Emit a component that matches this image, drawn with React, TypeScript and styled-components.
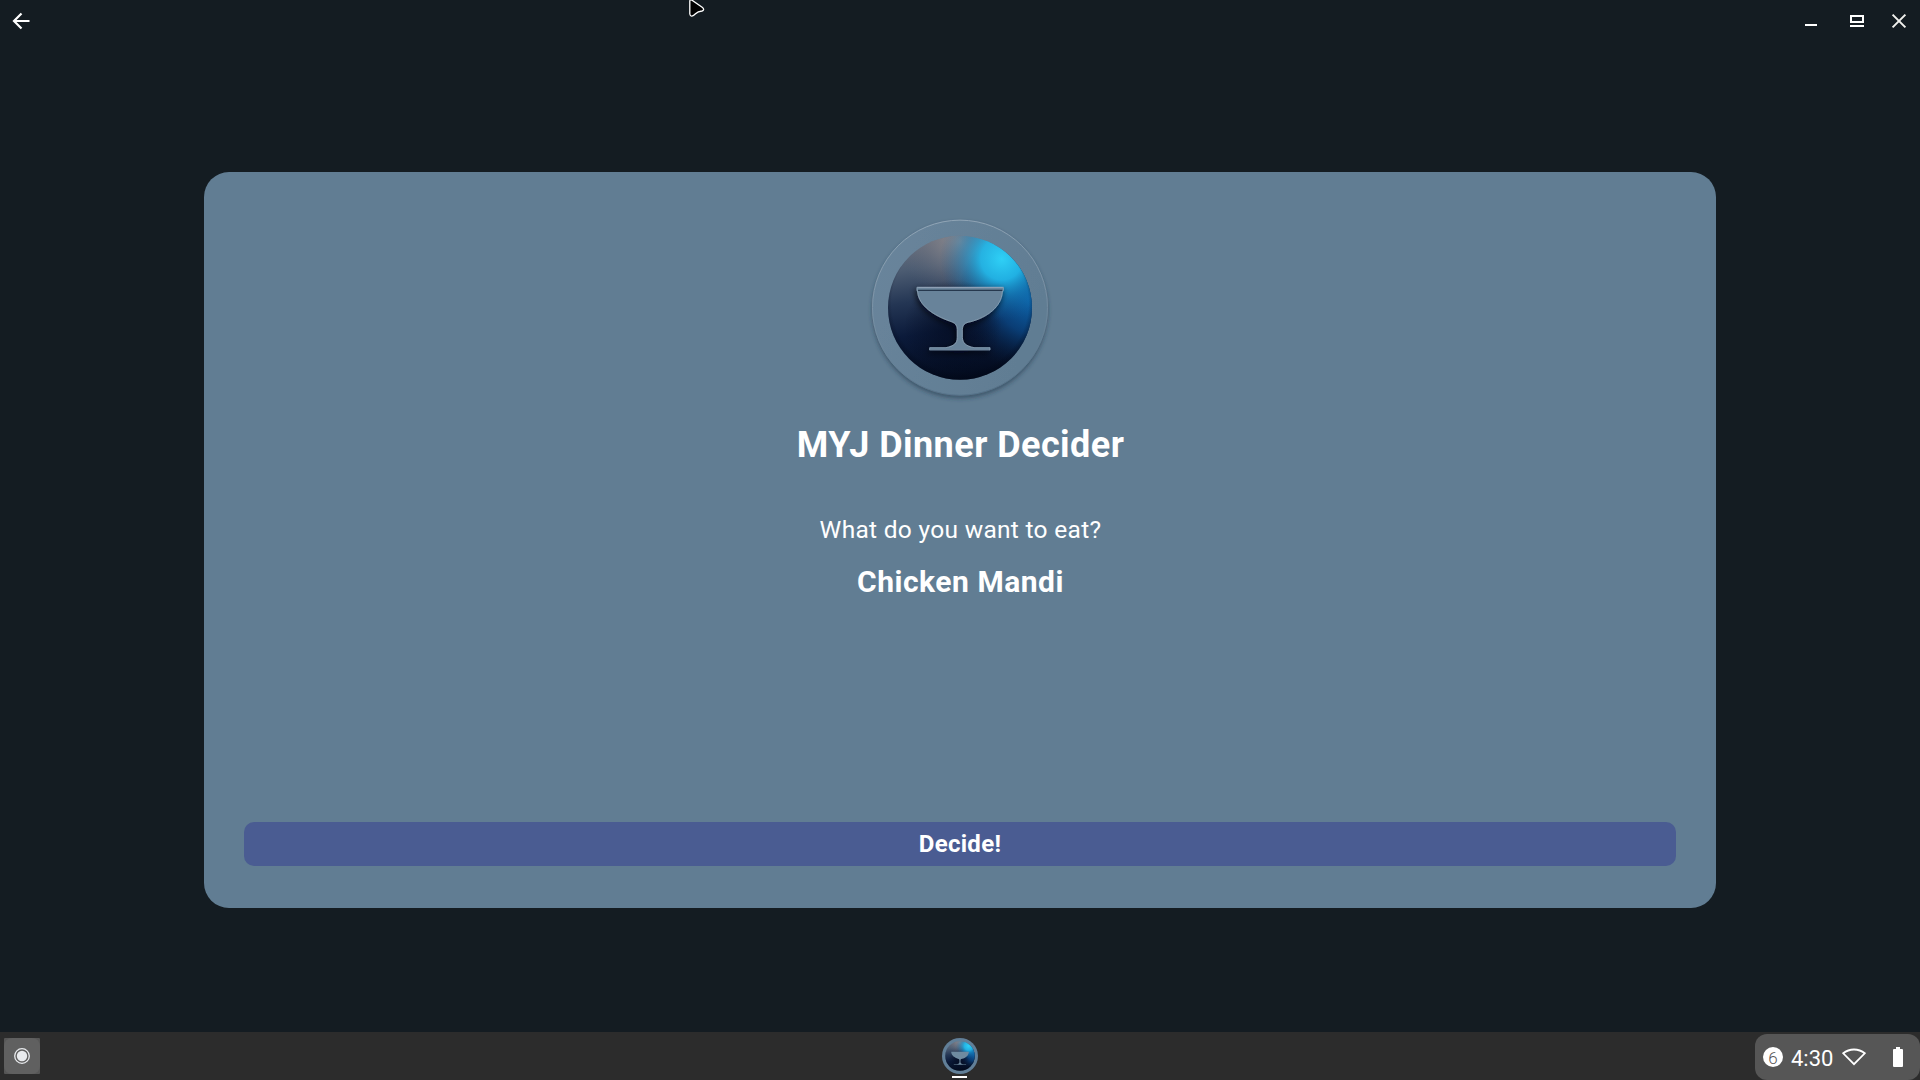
import React from "react";
import styled, { createGlobalStyle } from "styled-components";

const GlobalStyle = createGlobalStyle`
  * { box-sizing: border-box; }
  html, body { margin: 0; background: #141c22; }
  body { font-family: Roboto, "Noto Sans", sans-serif; color: #fff; overflow: hidden; }
`;

const Screen = styled.div`
  position: relative;
  width: 1920px;
  height: 1080px;
  display: flex;
  flex-direction: column;
  background: #141c22;
`;

const TitleBar = styled.header`
  height: 48px;
  flex: none;
  display: flex;
  justify-content: space-between;
  padding: 0 13px 0 12px;
`;

const WindowControls = styled.div`
  display: flex;
  gap: 26px;
`;

const PlainButton = styled.button<{ $width: number }>`
  width: ${(p) => p.$width}px;
  height: 42px;
  padding: 0;
  border: 0;
  background: none;
  display: flex;
  align-items: center;
  justify-content: center;
  svg { display: block; flex: none; }
`;

const Pointer = styled.svg`
  position: absolute;
  left: 688px;
  top: -2px;
`;

const Content = styled.main`
  flex: 1;
  display: flex;
  justify-content: center;
  align-items: flex-start;
  padding-top: 124px;
`;

const Card = styled.section`
  width: 1512px;
  height: 736px;
  padding: 28px 40px 42px;
  border-radius: 25px;
  background: #617d93;
  display: flex;
  flex-direction: column;
  align-items: center;
`;

const Title = styled.h1`
  margin: 4px 0 0;
  padding-left: 1px;
  font-size: 36px;
  line-height: 42px;
  font-weight: 700;
  letter-spacing: 0.45px;
`;

const Question = styled.p`
  margin: 49px 0 0;
  padding-left: 1px;
  font-size: 24.5px;
  line-height: 30px;
  letter-spacing: 0.3px;
`;

const Answer = styled.p`
  margin: 19px 0 0;
  padding-left: 1px;
  font-size: 30px;
  line-height: 36px;
  font-weight: 700;
  letter-spacing: 0.52px;
`;

const DecideButton = styled.button`
  width: 100%;
  height: 44px;
  margin-top: auto;
  padding: 0;
  border: 0;
  border-radius: 10px;
  background: #4a5c92;
  color: #fff;
  font: 700 24px/44px Roboto, sans-serif;
  letter-spacing: 0.3px;
`;

const Shelf = styled.footer`
  height: 48px;
  flex: none;
  display: grid;
  grid-template-columns: 1fr 36px 1fr;
  background: #2c2c2c;
`;

const Launcher = styled.button`
  width: 36px;
  height: 36px;
  margin: 6px 0 0 4px;
  padding: 0;
  border: 0;
  border-radius: 1px;
  background: #565656;
  svg { display: block; }
`;

const RunningApp = styled.div`
  display: flex;
  flex-direction: column;
  align-items: center;
  padding-top: 6px;
  gap: 2px;
  svg { display: block; }
`;

const RunningMark = styled.span`
  width: 15px;
  height: 2px;
  margin-right: 1px;
  background: #fff;
`;

const StatusTray = styled.div`
  justify-self: end;
  width: 165px;
  height: 46px;
  margin-top: 2px;
  padding-left: 8px;
  border-radius: 12px;
  background: #565656;
  display: flex;
  align-items: center;
  svg { display: block; flex: none; }
`;

const CountBadge = styled.span`
  width: 20px;
  height: 20px;
  border-radius: 50%;
  background: #fff;
  color: #565656;
  font-size: 17px;
  font-weight: 300;
  line-height: 22px;
  text-align: center;
`;

const Clock = styled.span`
  width: 42px;
  margin: 4px 9px 0 8px;
  font-size: 22px;
  line-height: 26px;
  white-space: nowrap;
`;

const Battery = styled.svg`
  margin-left: 27px;
`;

function Orb({ id }: { id: string }) {
  return (
    <>
      <defs>
        <linearGradient id={`${id}-base`} x1="0.35" y1="0" x2="0.5" y2="1">
          <stop offset="0" stopColor="#6d7380" />
          <stop offset="0.2" stopColor="#4c5c72" />
          <stop offset="0.42" stopColor="#243654" />
          <stop offset="0.65" stopColor="#0b1a3a" />
          <stop offset="1" stopColor="#020a1c" />
        </linearGradient>
        <radialGradient id={`${id}-warm`} cx="0.5" cy="0.04" r="0.42">
          <stop offset="0" stopColor="#9a9495" stopOpacity="0.9" />
          <stop offset="1" stopColor="#5b6274" stopOpacity="0" />
        </radialGradient>
        <radialGradient id={`${id}-side`} cx="1" cy="0.44" r="0.52">
          <stop offset="0" stopColor="#0d68b0" />
          <stop offset="0.45" stopColor="#0a4a8a" stopOpacity="0.75" />
          <stop offset="1" stopColor="#061a3c" stopOpacity="0" />
        </radialGradient>
        <radialGradient id={`${id}-sky`} cx="0.79" cy="0.16" r="0.43">
          <stop offset="0" stopColor="#2fd0f6" />
          <stop offset="0.34" stopColor="#22b8ea" stopOpacity="0.93" />
          <stop offset="0.62" stopColor="#1788c4" stopOpacity="0.55" />
          <stop offset="1" stopColor="#0d5490" stopOpacity="0" />
        </radialGradient>
        <radialGradient id={`${id}-edge`} cx="0.5" cy="0.47" r="0.54">
          <stop offset="0.88" stopColor="#010716" stopOpacity="0" />
          <stop offset="1" stopColor="#010716" stopOpacity="0.5" />
        </radialGradient>
        <radialGradient id={`${id}-shade`} cx="0.45" cy="0.64" r="0.34">
          <stop offset="0" stopColor="#030b20" stopOpacity="0.75" />
          <stop offset="1" stopColor="#030b20" stopOpacity="0" />
        </radialGradient>
      </defs>
      {["base", "warm", "side", "sky", "shade", "edge"].map((layer) => (
        <circle key={layer} cx="330" cy="323.5" r="216" fill={`url(#${id}-${layer})`} />
      ))}
    </>
  );
}

function Goblet() {
  return (
    <path d="M201 262 H460 V270 L457 276 C454 320 412 352 362 365 C344 368 338 374 337 388 V412 C338 430 348 438 372 443 H420 V450 H239 V443 H288 C312 438 322 430 322 412 V388 C321 374 315 368 299 363 C253 347 207 318 203 276 L201 270 Z" />
  );
}

function Logo() {
  return (
    <svg width="220" height="220" viewBox="0 0 660 660">
      <defs>
        <filter id="ring-shadow" x="-10%" y="-10%" width="120%" height="125%">
          <feDropShadow dx="0" dy="8" stdDeviation="7" floodColor="#1e3447" floodOpacity="0.55" />
        </filter>
        <filter id="goblet-shadow" x="-20%" y="-20%" width="140%" height="150%">
          <feDropShadow dx="-3" dy="7" stdDeviation="9" floodColor="#00040e" floodOpacity="0.75" />
        </filter>
        <linearGradient id="rim" x1="0.3" y1="0" x2="0.5" y2="1">
          <stop offset="0" stopColor="#91a5b6" />
          <stop offset="0.5" stopColor="#7890a4" />
          <stop offset="1" stopColor="#56738a" />
        </linearGradient>
        <linearGradient id="plate" x1="0" y1="0" x2="1" y2="0.4">
          <stop offset="0" stopColor="#69859c" />
          <stop offset="1" stopColor="#617d93" />
        </linearGradient>
      </defs>
      <circle cx="330" cy="323" r="262.5" fill="url(#plate)" stroke="url(#rim)" strokeWidth="3" filter="url(#ring-shadow)" />
      <Orb id="logo" />
      <g fill="#67839a" stroke="#8fa5b8" strokeWidth="2.5" strokeLinejoin="round" filter="url(#goblet-shadow)">
        <Goblet />
      </g>
      <path d="M204 271 H457" stroke="#26384e" strokeWidth="4" />
      <path d="M205 263 H458" stroke="#9aa9bd" strokeWidth="2" />
      <path d="M240 451 H418" stroke="#35455a" strokeWidth="2.5" />
    </svg>
  );
}

function ShelfIcon() {
  return (
    <svg width="36" height="36" viewBox="66 59.5 528 528">
      <circle cx="330" cy="323.5" r="264" fill="#617f98" />
      <Orb id="shelf" />
      <g fill="#6f8ba0"><Goblet /></g>
    </svg>
  );
}

export default function App() {
  return (
    <Screen>
      <GlobalStyle />
      <TitleBar>
        <PlainButton $width={18} aria-label="Back">
          <svg width="18" height="18" viewBox="0 0 18 18" fill="none" stroke="#fff" strokeWidth="2.2">
            <path d="M17.500 9H2M9.500 1.500L2 9L9.500 16.500" />
          </svg>
        </PlainButton>
        <WindowControls>
          <PlainButton $width={24} aria-label="Minimize">
            <svg width="20" height="20" viewBox="0 0 20 20">
              <path d="M4 13h12v2H4z" fill="#fff" />
            </svg>
          </PlainButton>
          <PlainButton $width={16} aria-label="Restore">
            <svg width="16" height="16" viewBox="0 0 16 16">
              <path d="M1 2h14v8H1zM3 4v4h10V4zM1 12h14v2H1z" fill="#fff" fillRule="evenodd" />
            </svg>
          </PlainButton>
          <PlainButton $width={16} aria-label="Close">
            <svg width="16" height="16" viewBox="0 0 16 16" stroke="#f1f1ee" strokeWidth="2">
              <path d="M1.600 1.600L14.400 14.400M14.400 1.600L1.600 14.400" />
            </svg>
          </PlainButton>
        </WindowControls>
      </TitleBar>
      <Content>
        <Card>
          <Logo />
          <Title>MYJ Dinner Decider</Title>
          <Question>What do you want to eat?</Question>
          <Answer>Chicken Mandi</Answer>
          <DecideButton>Decide!</DecideButton>
        </Card>
      </Content>
      <Shelf>
        <Launcher aria-label="Launcher">
          <svg width="36" height="36" viewBox="0 0 36 36">
            <rect width="36" height="36" rx="8" fill="#606060" />
            <circle cx="18" cy="18" r="7.3" fill="none" stroke="#e8eaed" strokeWidth="1.3" />
            <circle cx="18" cy="18" r="5.2" fill="#e8eaed" />
          </svg>
        </Launcher>
        <RunningApp>
          <ShelfIcon />
          <RunningMark />
        </RunningApp>
        <StatusTray>
          <CountBadge>6</CountBadge>
          <Clock>4:30</Clock>
          <svg width="24" height="18" viewBox="0 0 24 18" fill="none" stroke="#fff" strokeWidth="1.8">
            <path d="M1.200 5.300C7.500 0.200 16.500 0.200 22.800 5.300L12 16.200Z" />
          </svg>
          <Battery width="10" height="20" viewBox="0 0 10 20">
            <path d="M3 0h4v2h2a1 1 0 0 1 1 1v16a1 1 0 0 1-1 1H1a1 1 0 0 1-1-1V3a1 1 0 0 1 1-1h2z" fill="#fff" />
          </Battery>
        </StatusTray>
      </Shelf>
      <Pointer width="18" height="20" viewBox="0 0 18 20">
        <path d="M1.800 3.200C1.800 1.800 3 1.500 4 2.200L14.500 9.500C16.300 11 15.800 12.700 14 13C11 13.300 9.500 13.800 7.500 15.800C5 18.500 2.300 19.200 1.800 16Z" fill="#000" stroke="#fff" strokeWidth="1.300" />
      </Pointer>
    </Screen>
  );
}
